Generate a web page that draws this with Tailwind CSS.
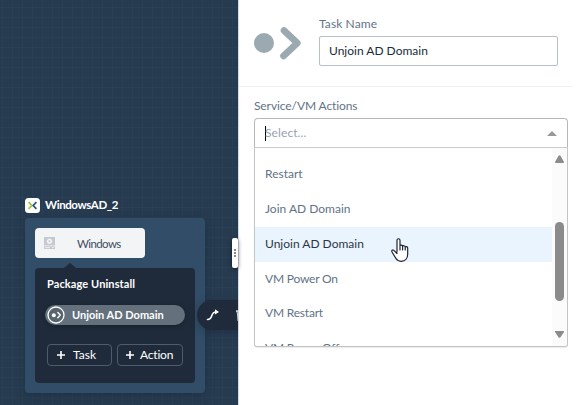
<!DOCTYPE html>
<html lang="en"><head><meta charset="utf-8"><title>Task editor</title>
<script src="https://cdn.jsdelivr.net/npm/@tailwindcss/browser@4"></script></head>
<body class="relative flex h-[405px] w-[578px] overflow-hidden bg-white font-['Lato',sans-serif] text-[12px] leading-[16px] [font-variant-ligatures:none]">
<main class="relative h-full w-[238px] shrink-0 overflow-hidden bg-[#273b50] bg-[linear-gradient(to_right,#2a3f54_1px,transparent_1px),linear-gradient(to_bottom,#2a3f54_1px,transparent_1px)] bg-[size:10px_10px] bg-[position:2px_7px]">
  <section class="absolute left-[25px] top-[197px] w-[180px]">
    <header class="flex h-[21px] items-start gap-[5px]">
      <svg class="mt-px h-[15px] w-[15px]" viewBox="0 0 15 15"><rect width="15" height="15" rx="3.5" fill="#fff"/><path d="M3.6 4.2l3.2 3.3-3.2 3.3" fill="none" stroke="#9fc63b" stroke-width="1.7"/><path d="M11.4 4.2L8.2 7.5l3.2 3.3" fill="none" stroke="#25557d" stroke-width="1.7"/></svg>
      <h2 class="whitespace-nowrap text-[11.5px] font-bold leading-[15px] tracking-[-0.4px] text-white">WindowsAD_2</h2>
    </header>
    <div class="flex h-[175px] flex-col rounded-[4px] bg-[#314d67] px-[10px] pt-[10px] shadow-[0_3px_10px_rgba(15,28,42,.3)]">
      <div class="flex h-[30px] w-[110px] items-center rounded-[4px] bg-[#f3f4f6] pl-[9px] text-[#3f4c5e]">
        <svg class="h-[12px] w-[11px]" viewBox="0 0 11 12"><path d="M0 0h11v8.5H0zM0 9.3h11V12H0z" fill="#c5cad0"/><circle cx="5.5" cy="4.3" r="1.8" fill="none" stroke="#f3f4f6" stroke-width="1.5"/><path d="M5.5 1.5v1M5.5 6v1M2.7 4.3h1M7.3 4.3h1M1 10.6h5M8 10.6h2" stroke="#f3f4f6" stroke-width=".8"/></svg>
        <span class="ml-[22px] pt-px text-[11.5px] tracking-[-0.6px]">Windows</span>
      </div>
      <svg class="ml-[29px] mt-[5px] h-[5px] w-[12px] shrink-0" viewBox="0 0 12 5"><path d="M0 5l6-5 6 5z" fill="#1f2b3a"/></svg>
      <div class="flex h-[115px] flex-col rounded-[4px] bg-[#1f2b3a] px-[10px] pt-[8px] text-white">
        <h3 class="pl-[2px] text-[11px] font-bold tracking-[0.1px]">Package Uninstall</h3>
        <div class="mt-[13px] flex h-[20px] items-center rounded-full bg-[#64717d] pl-[2px] shadow-[0_1px_5px_rgba(0,0,0,.25)]">
          <svg class="h-[18px] w-[18px]" viewBox="0 0 18 18"><circle cx="9" cy="9" r="8" fill="#59646f" stroke="#fff" stroke-width="1.3"/><circle cx="6.8" cy="9.2" r="2" fill="#fff"/><path d="M10.8 6.6l2.5 2.5-2.5 2.6" fill="none" stroke="#fff" stroke-width="1.4" stroke-linecap="round" stroke-linejoin="round"/></svg>
          <span class="ml-[7px] text-[11px] font-bold">Unjoin AD Domain</span>
        </div>
        <div class="ml-[2px] mt-[19px] flex gap-[5px] text-[12px]">
          <div class="flex h-[22px] w-[65px] items-center rounded-[4px] border border-[#4f5c69] pl-[9px]"><svg class="h-[8px] w-[8px]" viewBox="0 0 8 8"><path d="M4 0v8M0 4h8" stroke="#fff" stroke-width="1.6"/></svg><span class="ml-[8px]">Task</span></div>
          <div class="flex h-[22px] w-[66px] items-center rounded-[4px] border border-[#4f5c69] pl-[8px]"><svg class="h-[8px] w-[8px]" viewBox="0 0 8 8"><path d="M4 0v8M0 4h8" stroke="#fff" stroke-width="1.6"/></svg><span class="ml-[6px] tracking-[-0.2px]">Action</span></div>
        </div>
      </div>
    </div>
  </section>
  <div class="absolute left-[197px] top-[300px] flex h-[30px] w-[70px] items-center rounded-full bg-[#1f2b3a] shadow-[0_2px_8px_rgba(15,28,42,.35)]">
    <svg class="ml-[9px] h-[12px] w-[14px]" viewBox="0 0 14 12"><path d="M1.5 10.5c6 0 2.5-7.5 8.5-7.5" fill="none" stroke="#fff" stroke-width="1.6" stroke-linecap="round"/><path d="M9 .3L13 3 9 5.6z" fill="#fff"/></svg>
    <svg class="ml-[16px] h-[12px] w-[10px]" viewBox="0 0 10 12"><path d="M0 1.2h10v2H0zM.8 3.5h8.4L8.5 12h-7z" fill="#cbd0d5"/></svg>
  </div>
</main>
<aside class="h-full w-[340px] border-l border-[#d3d9e4] bg-white text-[#627386]">
  <section class="flex h-[87px] w-[334px] items-start border-b border-[#f0f1f2] pl-[14px]">
    <svg class="mt-[24px] h-[38px] w-[50px]" viewBox="0 0 50 38"><circle cx="11" cy="19" r="10" fill="#9ba9b0"/><path d="M31 6.5l13.3 12.5L30.5 32" fill="none" stroke="#9ba9b0" stroke-width="6.6" stroke-linecap="round" stroke-linejoin="round"/></svg>
    <div class="ml-[16px] pt-[16px]">
      <label class="block tracking-[0.1px]">Task Name</label>
      <div class="mt-[4px] flex h-[30px] w-[239px] items-center rounded-[2px] border border-[#b8bfc7] pl-[9px] text-[#202b38]"><span>Unjoin AD Domain</span></div>
    </div>
  </section>
  <section class="ml-[15px] w-[314px] pt-[11px]">
    <label class="block tracking-[-0.1px]">Service/VM Actions</label>
    <div class="mt-[4px] flex h-[29px] items-center justify-between rounded-t-[4px] border border-b-0 border-[#b7b7b7] pl-[10px] pr-[10px] text-[#97a3b1]">
      <div class="flex items-center"><i class="h-[15px] w-px bg-black"></i><span class="-ml-px tracking-[0.1px]">Select...</span></div>
      <svg class="h-[5px] w-[10px]" viewBox="0 0 10 5"><path d="M0 5l5-5 5 5z" fill="#999"/></svg>
    </div>
    <div class="flex h-[200px] overflow-hidden rounded-b-[3px] border border-t-[#ccc] border-[#c4c4c4] bg-white shadow-[0_1px_1px_rgba(0,0,0,.08)]">
      <ul class="w-[297px] pt-[9px]">
        <li class="flex h-[35px] items-center pl-[10px] pb-px">Restart</li>
        <li class="flex h-[35px] items-center pl-[10px] pb-px">Join AD Domain</li>
        <li class="flex h-[35px] items-center bg-[#eaf4fe] pb-px pl-[10px] text-[#2c3645]">Unjoin AD Domain</li>
        <li class="flex h-[35px] items-center pb-px pl-[10px] tracking-[-0.2px]">VM Power On</li>
        <li class="flex h-[34px] items-center pb-[2px] pl-[10px] tracking-[-0.2px]">VM Restart</li>
        <li class="flex h-[35px] items-center pb-px pl-[10px] tracking-[-0.2px]">VM Power Off</li>
      </ul>
      <div class="flex w-[15px] flex-col items-center bg-[#fbfbfb] pt-[7px]">
        <svg class="h-[8px] w-[9px] shrink-0" viewBox="0 0 9 8"><path d="M3.7.6q.8-.8 1.6 0L9 7q0 1-1 1H1Q0 8 0 7z" fill="#8b8b8b"/></svg>
        <i class="mt-[59px] h-[79px] w-[9px] shrink-0 rounded-full bg-[#8b8b8b]"></i>
        <svg class="mt-[30px] h-[7px] w-[9px] shrink-0" viewBox="0 0 9 7"><path d="M0 0h9v1L5.3 6.4q-.8.8-1.6 0L0 1z" fill="#8b8b8b"/></svg>
      </div>
    </div>
  </section>
</aside>
<div class="absolute left-[232px] top-[238px] flex h-[30px] w-[6px] flex-col items-center justify-center gap-px rounded-[2px] bg-white shadow-[0_1px_4px_rgba(0,0,0,.55)]"><i class="h-[2px] w-[2px] bg-[#888]"></i><i class="h-[2px] w-[2px] bg-[#888]"></i><i class="h-[2px] w-[2px] bg-[#888]"></i></div>
<svg class="absolute left-[391px] top-[238px] h-[24px] w-[18px]" viewBox="0 0 18 24"><path d="M6 14V2.2C6 .3 9 .3 9 2.2V8c.2-1.4 2.6-1 2.6.4.3-1.2 2.6-.8 2.6.8.3-1.1 2.5-.7 2.5.8v6c0 4-2.3 7.3-6.5 7.3-3 0-4.7-1.5-6-4L1 14c-.8-2 1.2-2.6 2.4-1.2L6 15.5M9 7.8V12M11.6 8.5V12M14.2 9.3V12" fill="#fff" stroke="#171b2d" stroke-width="1.15" stroke-linejoin="round" stroke-linecap="round"/></svg>
</body></html>
